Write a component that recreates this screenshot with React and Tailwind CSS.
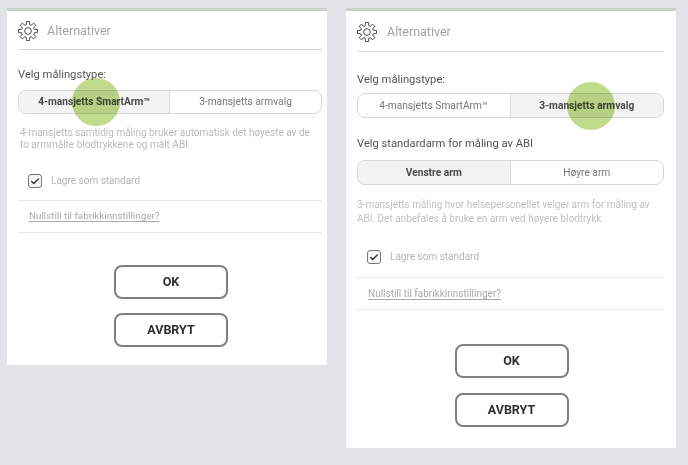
import React from 'react';

// 8 tooth gear outline, same look as the settings icon in the app
const gearPath = (() => {
  const teeth = 8;
  const pts = [];
  for (let i = 0; i < teeth; i++) {
    const a = (i / teeth) * Math.PI * 2 - Math.PI / 2;
    const step = (Math.PI * 2) / teeth;
    [[7.8, -0.36], [11.6, -0.2], [11.6, 0.2], [7.8, 0.36]].forEach(([r, f]) => {
      const t = a + f * step;
      pts.push(`${(12 + r * Math.cos(t)).toFixed(2)} ${(12 + r * Math.sin(t)).toFixed(2)}`);
    });
  }
  return `M${pts.join('L')}Z`;
})();

const Gear = () => (
  <svg className="w-[20px] h-[20px] text-[#4a4a4a]" viewBox="0 0 24 24" fill="none" stroke="currentColor" strokeWidth={1.2} strokeLinejoin="round">
    <path d={gearPath} />
    <circle cx="12" cy="12" r="4" />
  </svg>
);

const Segmented = ({ left, right, active, className }) => (
  <div className={`flex border-[1.5px] border-[#d6d6d6] rounded-[8px] overflow-hidden text-[10.2px] ${className}`}>
    <div className={`w-1/2 flex items-center justify-center border-r border-[#d8d8d8] ${active === 0 ? 'bg-[#f3f3f3] font-bold text-[#4a4a4a]' : 'text-[#777]'}`}>{left}</div>
    <div className={`w-1/2 flex items-center justify-center ${active === 1 ? 'bg-[#f3f3f3] font-bold text-[#4a4a4a]' : 'text-[#777]'}`}>{right}</div>
  </div>
);

const Checkbox = () => (
  <div className="w-[14px] h-[14px] border border-[#777] rounded-[3px] flex items-center justify-center bg-[#f7f7f7]">
    <svg className="w-[10px] h-[10px] text-[#333]" viewBox="0 0 24 24" fill="none" stroke="currentColor" strokeWidth={3.2} strokeLinecap="round" strokeLinejoin="round">
      <path d="M4 13l5 5L20 7" />
    </svg>
  </div>
);

const Button = ({ children }) => (
  <button className="w-[114px] h-[34px] border-2 border-[#808080] rounded-[8px] bg-white font-bold text-[12.5px] text-[#2e2e2e] flex items-center justify-center">{children}</button>
);

const Spot = ({ className }) => (
  <div className={`absolute w-[48px] h-[48px] rounded-full bg-[#bfdb8c] mix-blend-multiply ${className}`} />
);

export default function App() {
  return (
    <div className="w-[688px] h-[465px] overflow-hidden bg-[#e4e4e8] flex items-start gap-[19px] pl-[7px] pt-[8px] blur-[0.3px] font-['Roboto','Liberation_Sans',sans-serif]">
      {/* left card */}
      <div className="relative w-[320px] h-[357px] shrink-0 bg-white border-t-[3px] border-[#c9d2c8] pl-[11px] pr-[5px]">
        <div className="flex items-center h-[39px] border-b border-[#d6d6d6] gap-[9px] pt-[2px]">
          <Gear />
          <span className="text-[12.5px] text-[#a3a3a3]">Alternativer</span>
        </div>
        <p className="text-[11.2px] leading-[16px] text-[#555] mt-[17px]">Velg målingstype:</p>
        <Segmented className="h-[24px] mt-[7px]" left="4-mansjetts SmartArm™" right="3-mansjetts armvalg" active={0} />
        <p className="text-[10px] leading-[12px] text-[#bbb] mt-[13px] pl-[2px] pr-[8px]">4-mansjetts samtidig måling bruker automatisk det høyeste av de to armmålte blodtrykkene og målt ABI.</p>
        <div className="flex items-center gap-[9px] pl-[10px] mt-[22px]">
          <Checkbox />
          <span className="text-[10px] text-[#b5b5b5]">Lagre som standard</span>
        </div>
        <div className="border-t border-b border-[#e8e8e8] h-[33px] mt-[12px] pl-[11px] flex items-center">
          <span className="text-[9.8px] text-[#aaa] underline underline-offset-2">Nullstill til fabrikkinnstillinger?</span>
        </div>
        <div className="flex flex-col items-center gap-[14px] mt-[32px] pl-[2px]">
          <Button>OK</Button>
          <Button>AVBRYT</Button>
        </div>
        <Spot className="left-[65px] top-[67px]" />
      </div>

      {/* right card */}
      <div className="relative w-[330px] h-[440px] shrink-0 bg-white border-t-[3px] border-[#c9d2c8] pl-[11px] pr-[12px]">
        <div className="flex items-center h-[41px] border-b border-[#dcdcdc] gap-[10px] pt-[2px]">
          <Gear />
          <span className="text-[12.5px] text-[#a3a3a3]">Alternativer</span>
        </div>
        <p className="text-[11.2px] leading-[16px] text-[#555] mt-[20px]">Velg målingstype:</p>
        <Segmented className="h-[25px] mt-[5px]" left="4-mansjetts SmartArm™" right="3-mansjetts armvalg" active={1} />
        <p className="text-[11.2px] leading-[16px] text-[#555] mt-[18px]">Velg standardarm for måling av ABI</p>
        <Segmented className="h-[25px] mt-[8px]" left="Venstre arm" right="Høyre arm" active={0} />
        <p className="text-[10px] leading-[14px] text-[#c0c0c0] mt-[13px]">3-mansjetts måling hvor helsepersonellet velger arm for måling av ABI. Det anbefales å bruke en arm ved høyere blodtrykk.</p>
        <div className="flex items-center gap-[9px] pl-[10px] mt-[23px]">
          <Checkbox />
          <span className="text-[10px] text-[#b5b5b5]">Lagre som standard</span>
        </div>
        <div className="border-t border-b border-[#e8e8e8] h-[33px] mt-[13px] pl-[11px] flex items-center">
          <span className="text-[10px] text-[#aaa] underline underline-offset-2">Nullstill til fabrikkinnstillinger?</span>
        </div>
        <div className="flex flex-col items-center gap-[15px] mt-[34px] pl-[2px]">
          <Button>OK</Button>
          <Button>AVBRYT</Button>
        </div>
        <Spot className="left-[221px] top-[71px]" />
      </div>
    </div>
  );
}
